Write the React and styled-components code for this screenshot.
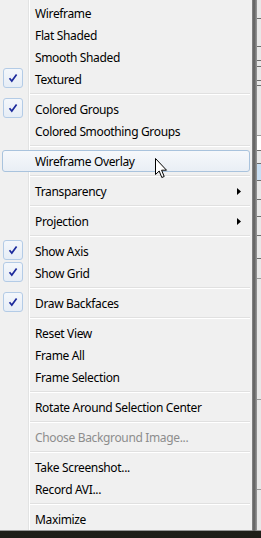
import React from "react";
import styled, { createGlobalStyle, css } from "styled-components";

const Global = createGlobalStyle`
  html, body { margin: 0; padding: 0; }
  body {
    width: 261px;
    height: 538px;
    overflow: hidden;
    background: #2a2a22;
    font-family: "Noto Sans", "Open Sans", sans-serif;
  }
`;

const Screen = styled.div`
  width: 261px;
  height: 538px;
  display: flex;
  flex-direction: column;
  background: linear-gradient(#55554a, #1e1e18);
`;

const Top = styled.div`
  display: flex;
  flex-direction: row;
  height: 531px;
`;

const Menu = styled.div`
  position: relative;
  width: 252px;
  box-sizing: border-box;
  padding-top: 2px;
  background-color: #f0f0f0;
  background-image: linear-gradient(
    to right,
    transparent 28px,
    #e2e3e3 28px,
    #e2e3e3 29px,
    #ffffff 29px,
    #ffffff 30px,
    transparent 30px
  );
  border-bottom: 1px solid #979797;
  display: flex;
  flex-direction: column;
`;

const Edge = styled.div`
  width: 5px;
  background: linear-gradient(to right, #8a8a8a, #5c5c5c 40%, #9a9a9a);
`;

const Behind = styled.div`
  flex: 1;
  background: #e8e8e8;
  display: flex;
  flex-direction: column;
`;

const BehindLine = styled.div`
  height: ${(p) => p.$h}px;
  border-bottom: 1px solid ${(p) => p.$c || "#6d6d6d"};
  background: ${(p) => p.$bg || "transparent"};
`;

const Item = styled.div`
  position: relative;
  height: 22px;
  box-sizing: border-box;
  margin: 0 2px 0 2px;
  padding-left: 32px;
  padding-right: 8px;
  display: flex;
  align-items: center;
  font-size: 12px;
  letter-spacing: -0.35px;
  color: ${(p) => (p.$disabled ? "#8d8d8d" : "#000000")};
  white-space: nowrap;
  border: 1px solid transparent;
  border-radius: 3px;
  ${(p) =>
    p.$hover &&
    css`
      border-color: #a9c3dd;
      background: linear-gradient(#f6f8fb, #e9eef5);
    `}
`;

const CheckBox = styled.div`
  position: absolute;
  left: 0px;
  top: -1px;
  width: 20px;
  height: 20px;
  box-sizing: border-box;
  border: 1px solid #b3cbe6;
  border-radius: 3px;
  background: linear-gradient(#f4f7fb, #e6edf6);
  display: flex;
  align-items: center;
  justify-content: center;
`;

const Label = styled.span`
  flex: 1;
`;

const Sep = styled.div`
  height: 8px;
  box-sizing: border-box;
  padding-top: 3px;
  margin-left: 30px;
  margin-right: 2px;
  &::before {
    content: "";
    display: block;
    height: 1px;
    background: #e0e0e0;
    border-bottom: 1px solid #ffffff;
  }
`;

const Cursor = styled.svg`
  position: absolute;
  left: 155px;
  top: 158px;
  pointer-events: none;
`;

const Check = () => (
  <svg width="10" height="10" viewBox="0 0 10 10">
    <path
      d="M1.5 5.2 L3.8 8 L8.6 1.6"
      fill="none"
      stroke="#1c2a9c"
      strokeWidth="1.7"
      strokeLinejoin="miter"
    />
  </svg>
);

const Arrow = () => (
  <svg width="4" height="7" viewBox="0 0 4 7">
    <path d="M0 0 L4 3.5 L0 7 Z" fill="#000" />
  </svg>
);

const menu = [
  { t: "Wireframe" },
  { t: "Flat Shaded" },
  { t: "Smooth Shaded" },
  { t: "Textured", c: true },
  "-",
  { t: "Colored Groups", c: true },
  { t: "Colored Smoothing Groups" },
  "-",
  { t: "Wireframe Overlay", h: true },
  "-",
  { t: "Transparency", s: true },
  "-",
  { t: "Projection", s: true },
  "-",
  { t: "Show Axis", c: true },
  { t: "Show Grid", c: true },
  "-",
  { t: "Draw Backfaces", c: true },
  "-",
  { t: "Reset View" },
  { t: "Frame All" },
  { t: "Frame Selection" },
  "-",
  { t: "Rotate Around Selection Center" },
  "-",
  { t: "Choose Background Image...", d: true },
  "-",
  { t: "Take Screenshot..." },
  { t: "Record AVI..." },
  "-",
  { t: "Maximize" },
];

const behind = [
  { h: 18 }, { h: 27 }, { h: 13 }, { h: 5 }, { h: 13 }, { h: 4 },
  { h: 50, c: "#9a9a9a" }, { h: 14, bg: "#ffffff" }, { h: 12 },
  { h: 16, bg: "#c9dff3" }, { h: 18 }, { h: 16 }, { h: 18 }, { h: 22 },
  { h: 20, c: "#9a9a9a" }, { h: 120, c: "#9a9a9a" }, { h: 90, c: "#9a9a9a" },
  { h: 40, c: "#9a9a9a" },
];

export default function App() {
  return (
    <>
      <Global />
      <Screen>
        <Top>
          <Menu>
            {menu.map((m, i) =>
              m === "-" ? (
                <Sep key={i} />
              ) : (
                <Item key={i} $hover={m.h} $disabled={m.d}>
                  {m.c && (
                    <CheckBox>
                      <Check />
                    </CheckBox>
                  )}
                  <Label>{m.t}</Label>
                  {m.s && <Arrow />}
                </Item>
              )
            )}
            <Cursor width="13" height="21" viewBox="0 0 13 21">
              <path
                d="M0.5 0.5 L0.5 16.5 L4.2 13 L6.8 19.5 L9.2 18.5 L6.6 12.2 L11.5 12.2 Z"
                fill="#ffffff"
                stroke="#000000"
                strokeWidth="1"
                strokeLinejoin="round"
              />
            </Cursor>
          </Menu>
          <Edge />
          <Behind>
            {behind.map((b, i) => (
              <BehindLine key={i} $h={b.h} $c={b.c} $bg={b.bg} />
            ))}
          </Behind>
        </Top>
      </Screen>
    </>
  );
}
